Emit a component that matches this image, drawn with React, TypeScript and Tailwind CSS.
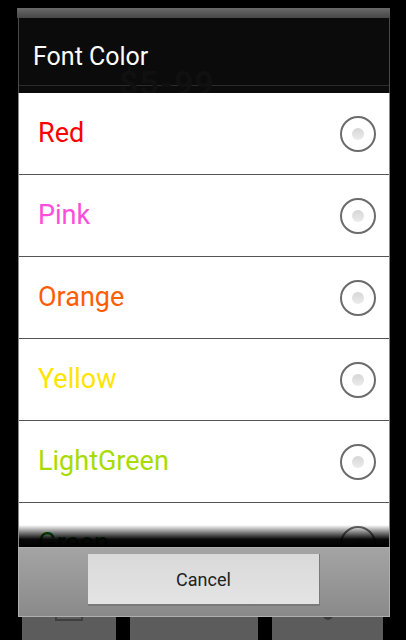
import React from "react";

const colors = [
  { name: "Red", color: "text-[#ff0000]" },
  { name: "Pink", color: "text-[#ff4ddb]" },
  { name: "Orange", color: "text-[#ff5e00]" },
  { name: "Yellow", color: "text-[#ffe400]" },
  { name: "LightGreen", color: "text-[#a8dc00]" },
  { name: "Green", color: "text-[#007a00]" },
];

function Radio() {
  return (
    <div className="w-[36px] h-[36px] rounded-full border-2 border-[#6b6b6b] flex items-center justify-center">
      <div className="w-[12px] h-[12px] rounded-full bg-gradient-to-b from-[#d6d6d6] to-[#ececec]" />
    </div>
  );
}

export default function App() {
  return (
    <div className="relative w-[406px] h-[640px] bg-black overflow-hidden font-['Roboto',sans-serif]">
      {/* screen behind the dialog */}
      <div className="absolute left-0 right-0 bottom-0 h-[40px] flex px-[22px] gap-[14px]">
        <div className="w-[94px] h-full bg-[#5c5c5c] flex justify-center">
          <div className="mt-[12px] w-[28px] h-[9px] border-2 border-t-0 border-[#3e3e3e]" />
        </div>
        <div className="w-[128px] h-full bg-[#5c5c5c]" />
        <div className="w-[111px] h-full bg-[#5c5c5c] flex justify-center">
          <div className="mt-[10px] w-[10px] h-[10px] rounded-full bg-[#3a3a3a]" />
        </div>
      </div>

      <div className="relative ml-[18px] mt-[8px] w-[372px] flex flex-col">
        <div className="h-[10px] -ml-[1px] bg-gradient-to-b from-[#6a6a6a] to-[#474747]" />
        <div className="h-[75px] bg-[#0b0b0b] border-x border-[#4a4a4a] flex flex-col">
          <div className="relative h-[67px] flex items-center px-[14px]">
            <span className="absolute left-[100px] top-[40px] text-[34px] font-bold text-[#101010] tracking-wide">
              $5-99
            </span>
            <span className="relative text-white text-[25px] leading-none mt-[10px]">Font Color</span>
          </div>
          <div className="h-px bg-[#2c2c2c]" />
        </div>

        <div className="relative h-[454px] overflow-hidden bg-white border-x border-[#8a8a8a]">
          {colors.map((c) => (
            <div
              key={c.name}
              className="h-[82px] shrink-0 border-b border-[#555] flex items-center justify-between pl-[19px] pr-[13px]"
            >
              <span className={`text-[27px] leading-none ${c.color}`}>{c.name}</span>
              <Radio />
            </div>
          ))}
          <div className="absolute left-0 right-0 bottom-0 h-[22px] bg-[linear-gradient(to_bottom,rgba(0,0,0,0)_0%,rgba(0,0,0,0.97)_65%,#000_100%)]" />
        </div>

        <div className="h-[70px] bg-gradient-to-b from-[#a4a4a4] to-[#8a8a8a] border border-[#b0b0b0] flex items-start justify-center pt-[6px]">
          <button className="w-[232px] h-[52px] bg-gradient-to-b from-[#d9d9d9] to-[#e4e4e4] border-b-2 border-r border-[#7a7a7a] text-[#222] text-[18px]">
            Cancel
          </button>
        </div>
      </div>
    </div>
  );
}
